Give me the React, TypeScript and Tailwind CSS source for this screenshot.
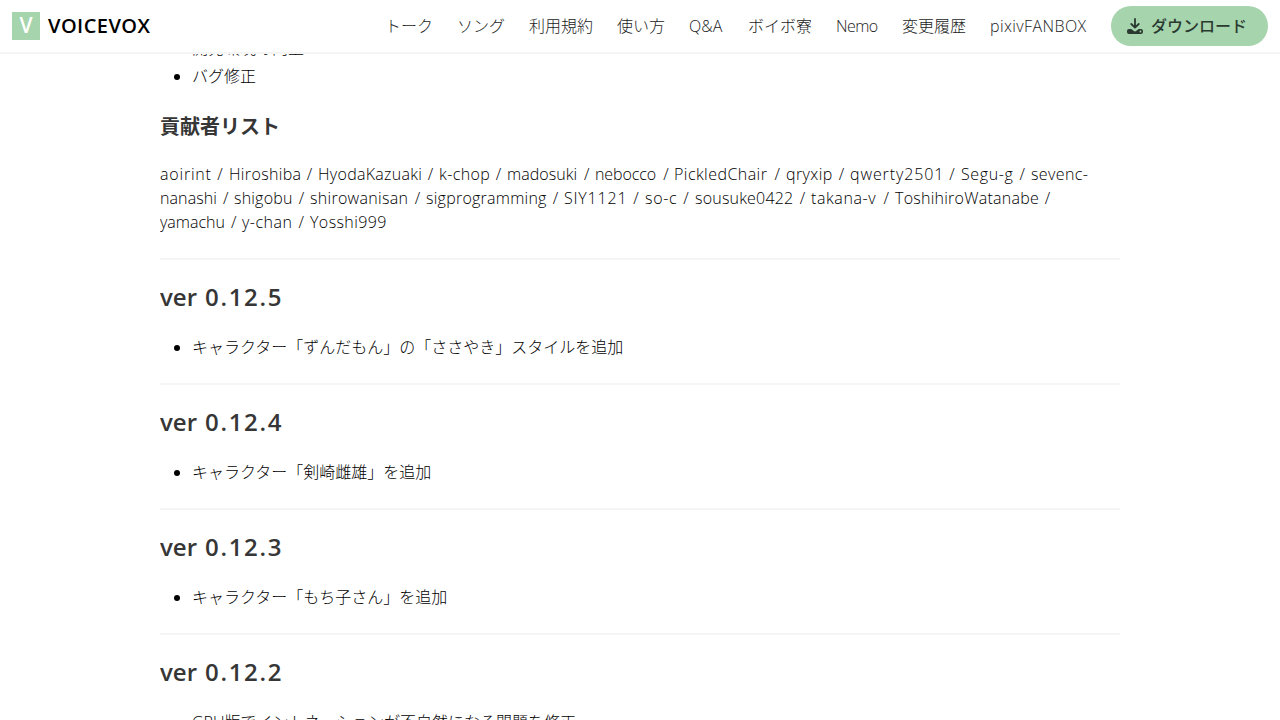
const nav = [
  { label: "トーク", cls: "w-12" },
  { label: "ソング", cls: "w-12" },
  { label: "利用規約", cls: "w-16" },
  { label: "使い方", cls: "w-12" },
  { label: "Q&A", cls: "w-[35px]" },
  { label: "ボイボ寮", cls: "w-16" },
  { label: "Nemo", cls: "w-[42px] tracking-[-0.6px]" },
  { label: "変更履歴", cls: "w-16" },
  { label: "pixivFANBOX", cls: "w-[97px] tracking-[0.4px]" },
];

const contributors = [
  [
    { name: "aoirint", cls: "w-[69px] tracking-[0.8px]" },
    { name: "Hiroshiba", cls: "w-[89px] tracking-[0.35px]" },
    { name: "HyodaKazuaki", cls: "w-[121px] tracking-[0.3px]" },
    { name: "k-chop", cls: "w-[68px] tracking-[0.4px]" },
    { name: "madosuki", cls: "w-[88px] tracking-[0.05px]" },
    { name: "nebocco", cls: "w-[79px] tracking-[-0.1px]" },
    { name: "PickledChair", cls: "w-[112px] tracking-[0.45px]" },
    { name: "qryxip", cls: "w-[64px] tracking-[0.4px]" },
    { name: "qwerty2501", cls: "w-[111px] tracking-[0.9px]" },
    { name: "Segu-g", cls: "w-[70px] tracking-[0.6px]" },
    { name: "sevenc-", cls: "w-[58px] tracking-[0.4px]", last: true },
  ],
  [
    { name: "nanashi", cls: "w-[74px] tracking-[0.1px]" },
    { name: "shigobu", cls: "w-[76px] tracking-[0.2px]" },
    { name: "shirowanisan", cls: "w-[116px] tracking-[0.3px]" },
    { name: "sigprogramming", cls: "w-[138px] tracking-[0.25px]" },
    { name: "SIY1121", cls: "w-[81px] tracking-[0.8px]" },
    { name: "so-c", cls: "w-[50px] tracking-[0.7px]" },
    { name: "sousuke0422", cls: "w-[116px] tracking-[0.2px]" },
    { name: "takana-v", cls: "w-[84px] tracking-[0.6px]" },
    { name: "ToshihiroWatanabe", cls: "w-[161px] tracking-[0.25px]" },
  ],
  [
    { name: "yamachu", cls: "w-[82px]" },
    { name: "y-chan", cls: "w-[68px] tracking-[0.5px]" },
    { name: "Yosshi999", cls: "w-[78px] tracking-[0.4px]", last: true },
  ],
];

const releases = [
  { version: "0.12.5", note: "キャラクター「ずんだもん」の「ささやき」スタイルを追加" },
  { version: "0.12.4", note: "キャラクター「剣崎雌雄」を追加" },
  { version: "0.12.3", note: "キャラクター「もち子さん」を追加" },
  { version: "0.12.2", note: "GPU版でイントネーションが不自然になる問題を修正" },
];

function DownloadIcon() {
  return (
    <svg viewBox="0 0 16 16" className="size-4" fill="none">
      <path d="M8 1v8.500M4.300 6l3.700 3.700L11.700 6" stroke="currentColor" strokeWidth="1.800" strokeLinecap="round" strokeLinejoin="round" />
      <path
        d="M2 11h2.300l2.300 1.800a2 2 0 0 0 2.800 0l2.300-1.800H14a2 2 0 0 1 2 2v1a2 2 0 0 1-2 2H2a2 2 0 0 1-2-2v-1a2 2 0 0 1 2-2Zm11.500 1.600a.9.9 0 1 0 0 1.800.9.9 0 0 0 0-1.800Z"
        fill="currentColor"
        fillRule="evenodd"
      />
    </svg>
  );
}

export default function App() {
  return (
    <div className="flex h-[720px] flex-col overflow-hidden bg-white font-['Open_Sans','Noto_Sans_CJK_JP',sans-serif] text-base font-light text-black">
      <header className="flex h-[54px] shrink-0 items-center justify-between border-b-2 border-[#f5f5f5] px-3">
        <div className="flex items-center gap-2">
          <div className="flex size-7 items-center justify-center bg-[#a5d4ad] text-[21px] font-semibold text-white">V</div>
          <span className="text-xl font-semibold tracking-[0.45px]">VOICEVOX</span>
        </div>
        <nav className="flex items-center gap-6">
          {nav.map((n) => (
            <a key={n.label} className={`${n.cls} whitespace-nowrap text-[#1a1a1a]`}>{n.label}</a>
          ))}
          <a className="flex h-10 w-[157px] items-center gap-2 rounded-full bg-[#a5d4ad] pl-4 font-medium text-[#2b3a30]">
            <DownloadIcon />
            ダウンロード
          </a>
        </nav>
      </header>
      <main className="mx-auto flex min-h-0 w-[960px] flex-1 flex-col overflow-hidden">
        <ul className="-mt-[18px] list-disc pl-8 leading-6">
          <li className="mb-1">開発環境の向上</li>
          <li>バグ修正</li>
        </ul>
        <h3 className="mt-6 text-xl leading-[30px] font-bold text-[#363636]">貢献者リスト</h3>
        <div className="mt-5 leading-6">
          {contributors.map((line, i) => (
            <p key={i} className="flex whitespace-nowrap">
              {line.map((c) => (
                <span key={c.name} className={`${c.cls} flex shrink-0 justify-between pr-[5.5px]`}>
                  <span>{c.name}</span>
                  {!("last" in c) && <span>/</span>}
                </span>
              ))}
            </p>
          ))}
        </div>
        {releases.map((r) => (
          <section key={r.version} className="h-[125px] shrink-0">
            <hr className="mt-6 border-t-2 border-[#f5f5f5]" />
            <h2 className="mt-[23px] text-2xl leading-[27px] font-semibold text-[#363636]">
              ver<span className="tracking-[1.7px]"> {r.version}</span>
            </h2>
            <ul className="mt-[25px] list-disc pl-8 leading-6"><li>{r.note}</li></ul>
          </section>
        ))}
      </main>
    </div>
  );
}
